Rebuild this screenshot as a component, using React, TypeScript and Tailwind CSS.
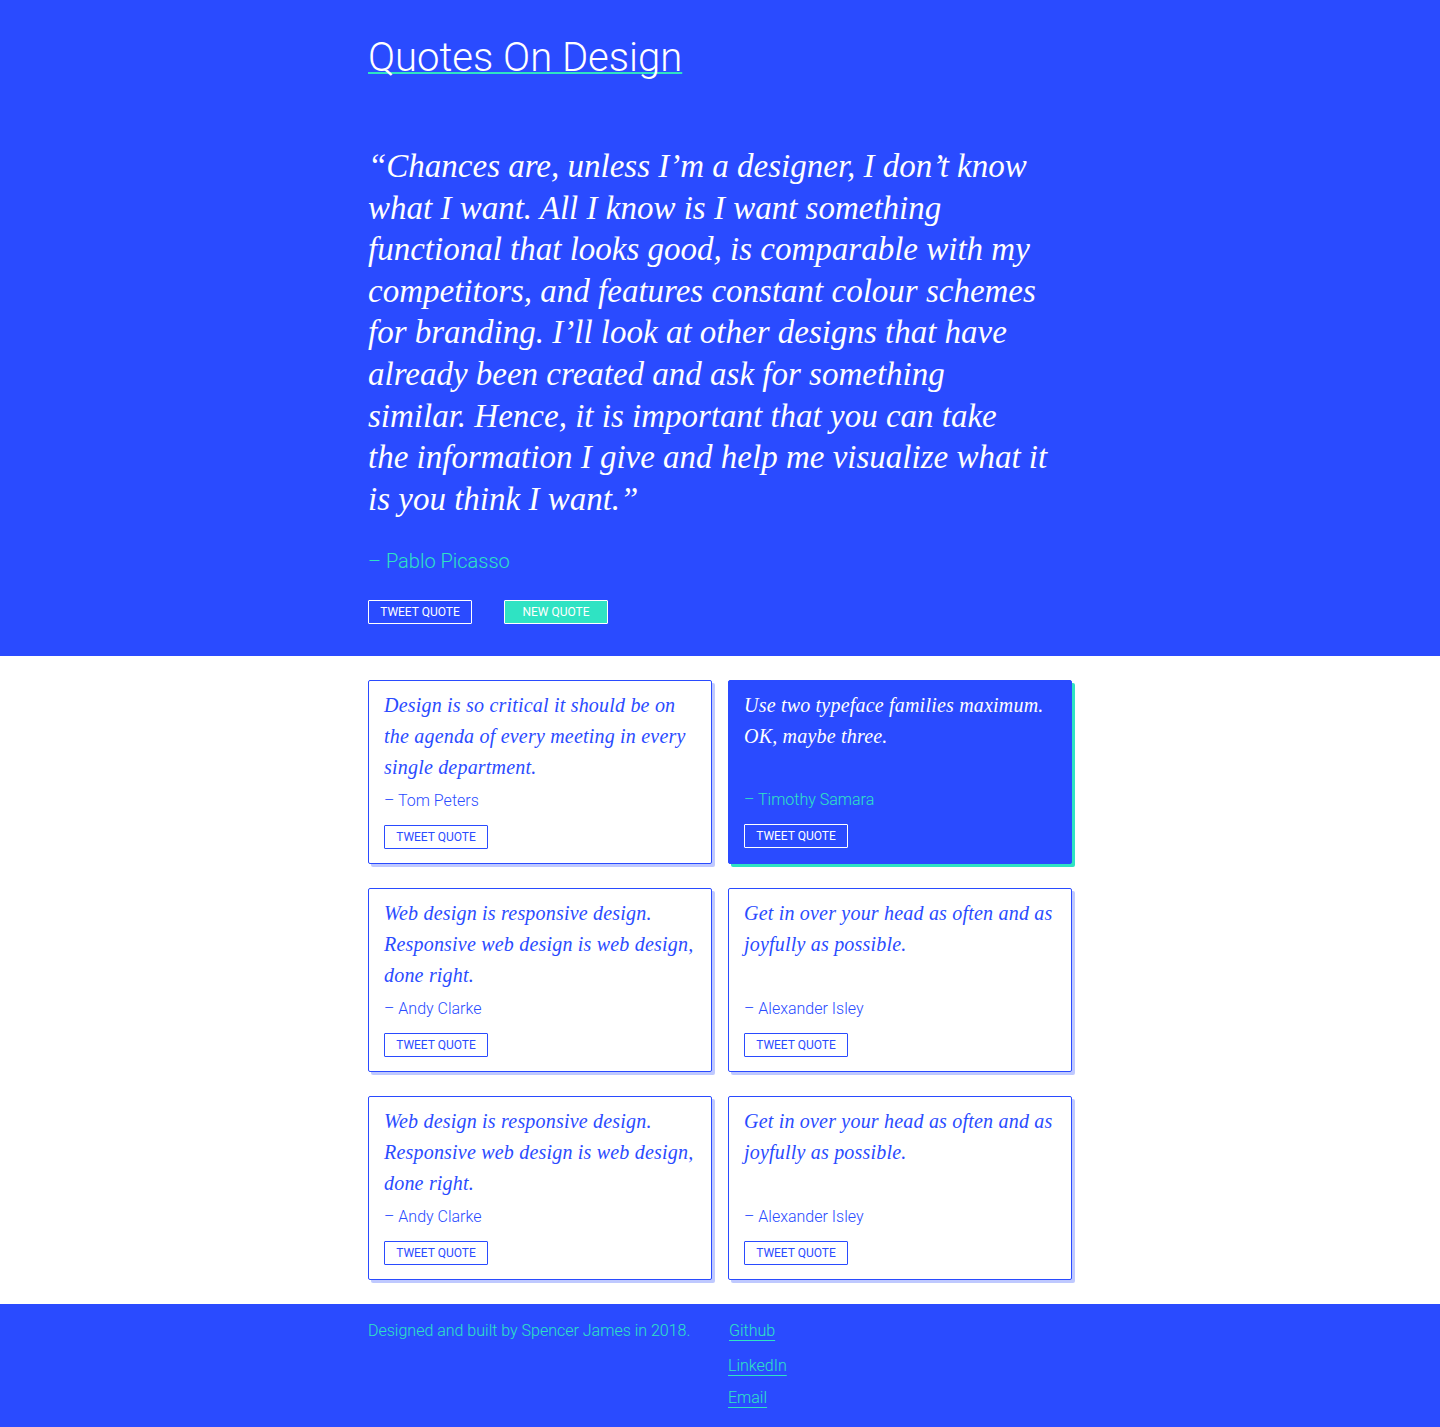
const sans = "font-['Roboto','Noto_Sans',sans-serif]";
const serif = "font-['Liberation_Serif','DejaVu_Serif',serif]";

const cards = [
  { quote: "Design is so critical it should be on the agenda of every meeting in every single department.", author: "Tom Peters" },
  { quote: "Use two typeface families maximum. OK, maybe three.", author: "Timothy Samara", active: true },
  { quote: "Web design is responsive design. Responsive web design is web design, done right.", author: "Andy Clarke" },
  { quote: "Get in over your head as often and as joyfully as possible.", author: "Alexander Isley" },
  { quote: "Web design is responsive design. Responsive web design is web design, done right.", author: "Andy Clarke" },
  { quote: "Get in over your head as often and as joyfully as possible.", author: "Alexander Isley" },
];

const heroLines = [
  "“Chances are, unless I’m a designer, I don’t know",
  "what I want. All I know is I want something",
  "functional that looks good, is comparable with my",
  "competitors, and features constant colour schemes",
  "for branding. I’ll look at other designs that have",
  "already been created and ask for something",
  "similar. Hence, it is important that you can take",
  "the information I give and help me visualize what it",
  "is you think I want.”",
];

function QuoteCard({ quote, author, active }: { quote: string; author: string; active?: boolean }) {
  return (
    <div
      className={
        active
          ? "flex flex-col rounded-[2px] border border-[#2a4bff] bg-[#2a4bff] px-[15px] pt-[9px] pb-[15px] shadow-[3px_3px_0_#2fe3c3]"
          : "flex flex-col rounded-[2px] border border-[#2a4bff] bg-white px-[15px] pt-[9px] pb-[14px] shadow-[3px_3px_0_rgba(42,75,255,0.3)]"
      }
    >
      <p className={`flex-1 ${serif} text-[20px] italic leading-[31px] tracking-[0.2px] ${active ? "text-white" : "text-[#2a4bff]"}`}>{quote}</p>
      <div className={`mt-[6px] text-base font-light leading-6 ${active ? "text-[#2fe3c3]" : "text-[#2a4bff]"}`}>– {author}</div>
      <button
        className={`mt-3 h-6 w-[104px] rounded-[1px] border text-[12px] uppercase leading-none ${
          active ? "border-white text-white" : "border-[#2a4bff] text-[#2a4bff]"
        }`}
      >
        Tweet Quote
      </button>
    </div>
  );
}

export default function App() {
  return (
    <div className={`min-h-[1427px] flex flex-col bg-white ${sans}`}>
      <header className="bg-[#2a4bff] pt-[30px] pb-8">
        <div className="mx-auto w-[704px]">
          <h1 className="text-[40px] font-light leading-[56px] text-white">
            <a href="#" className="underline decoration-[#2fe3c3] decoration-2 underline-offset-[1px] [text-decoration-skip-ink:none]">
              Quotes On Design
            </a>
          </h1>
          <blockquote className={`mt-[60px] ${serif} text-[33px] italic leading-[41.6px] text-white`}>
            {heroLines.map((l, i) => (
              <span key={i} className="block whitespace-nowrap">{l}</span>
            ))}
          </blockquote>
          <div className="mt-[27px] text-[20px] font-light leading-7 text-[#2fe3c3]">– Pablo Picasso</div>
          <div className="mt-[25px] flex gap-8">
            <button className="h-6 w-[104px] rounded-[1px] border border-white text-[12px] uppercase leading-none text-white">
              Tweet Quote
            </button>
            <button className="h-6 w-[104px] rounded-[1px] border border-white bg-[#2fe3c3] text-[12px] uppercase leading-none text-white">
              New Quote
            </button>
          </div>
        </div>
      </header>

      <main className="py-6">
        <div className="mx-auto grid w-[704px] grid-cols-2 gap-x-4 gap-y-6">
          {cards.map((c, i) => (
            <QuoteCard key={i} {...c} />
          ))}
        </div>
      </main>

      <footer className="flex-1 bg-[#2a4bff] pt-[15px] pb-[18px]">
        <div className="mx-auto grid w-[704px] grid-cols-2 gap-x-4 text-base font-light leading-6 text-[#2fe3c3]">
          <p className="whitespace-nowrap">Designed and built by Spencer James in 2018.</p>
          <div className="flex flex-col items-start">
            <a href="#" className="ml-px underline underline-offset-4">Github</a>
            <a href="#" className="mt-[11px] underline underline-offset-4">LinkedIn</a>
            <a href="#" className="mt-2 underline underline-offset-4">Email</a>
          </div>
        </div>
      </footer>
    </div>
  );
}
